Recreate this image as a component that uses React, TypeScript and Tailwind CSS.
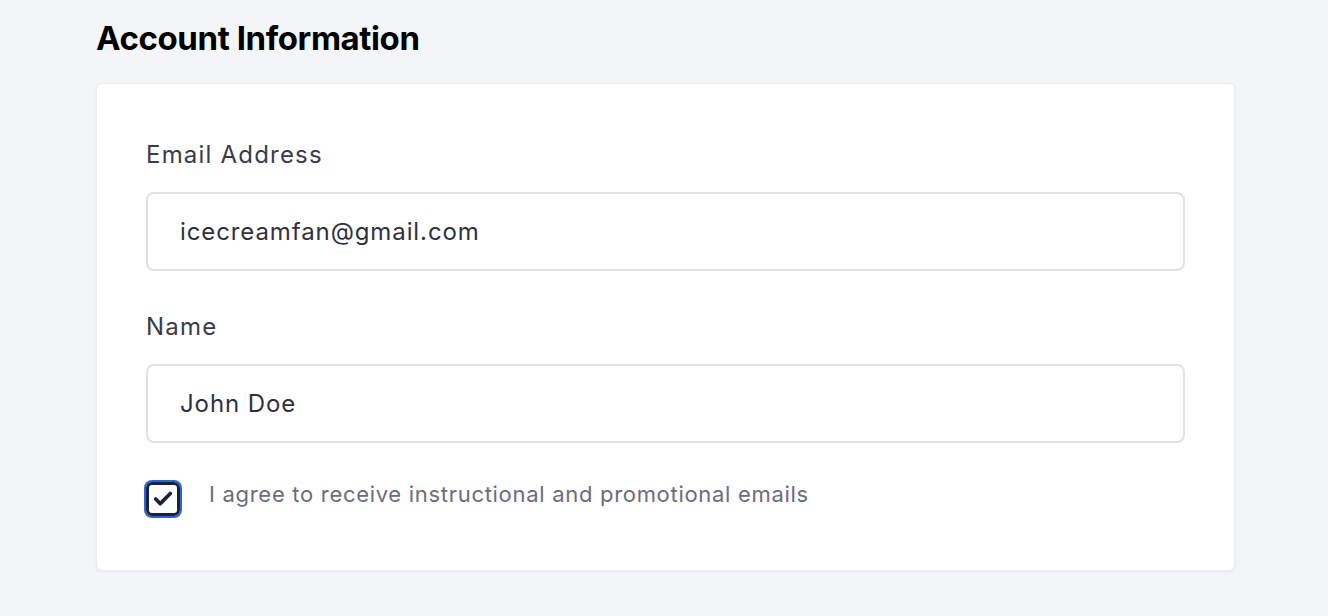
import { Check } from 'lucide-react'

const App: React.FC = () => {
  // ? Render(s)
  return (
    <div className="min-h-[616px] bg-[#f4f5f7] px-[96px] pt-[16px] font-['Inter',sans-serif]">
      <h1 className="text-[33px] font-bold leading-[44px] tracking-[-0.4px] text-black">Account Information</h1>

      {/* account card */}
      <div className="mt-[23px] w-[1139px] rounded-[6px] border border-[#ececf0] bg-white px-[49px] pb-[54px] pt-[56px] shadow-[0_1px_3px_rgba(0,0,0,0.06)]">
        {/* email */}
        <label className="block text-[24px] leading-[30px] tracking-[1.2px] text-[#393c47]">Email Address</label>
        <input
          readOnly
          value="icecreamfan@gmail.com"
          className="mt-[22px] block h-[79px] w-full rounded-[8px] border-2 border-[#e2e2e6] px-[32px] text-[24px] tracking-[0.9px] text-[#2f323c] outline-none"
        />

        {/* name */}
        <label className="mt-[41px] block text-[24px] leading-[30px] tracking-[1.2px] text-[#393c47]">Name</label>
        <input
          readOnly
          value="John Doe"
          className="mt-[22px] block h-[79px] w-full rounded-[8px] border-2 border-[#e2e2e6] px-[32px] text-[24px] tracking-[0.9px] text-[#2f323c] outline-none"
        />

        {/* agreement */}
        <div className="mt-[39px] flex items-start gap-[29px]">
          <span className="flex h-[34px] w-[34px] shrink-0 items-center justify-center rounded-[6px] border-[3px] border-[#1a2235] ring-2 ring-[#2b63d9]">
            <Check className="h-[22px] w-[22px] text-[#1a2235]" strokeWidth={4} />
          </span>
          <span className="text-[22px] leading-[24px] tracking-[0.7px] text-[#6b6d7c]">I agree to receive instructional and promotional emails</span>
        </div>
      </div>
    </div>
  )
}

export default App
